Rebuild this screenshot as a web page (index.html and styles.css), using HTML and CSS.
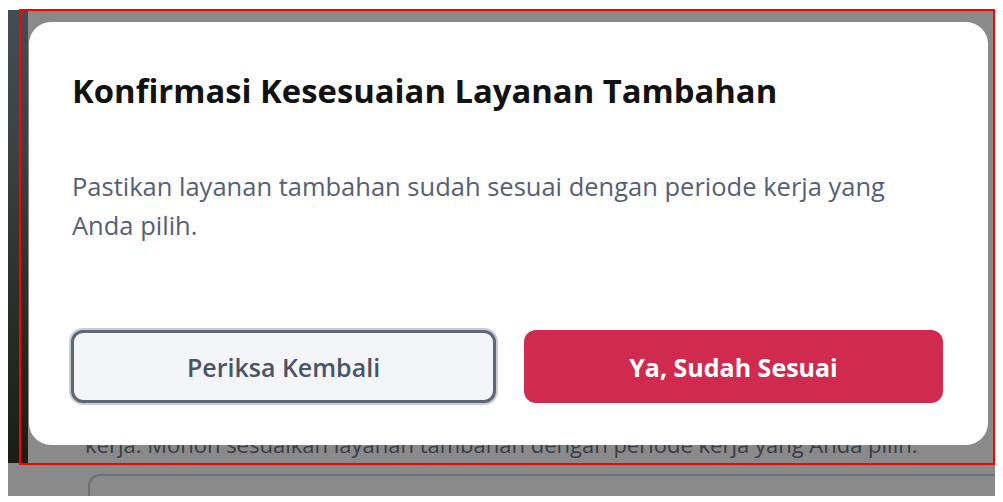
FILE: index.html
```html
<!DOCTYPE html>
<html lang="id">
<head>
    <meta charset="UTF-8">
    <meta name="viewport" content="width=device-width, initial-scale=1.0">
    <title>Konfirmasi Layanan Tambahan</title>
    <link rel="stylesheet" href="styles.css">
</head>
<body>
  <div class="frame">
    <div class="photo"></div>
    <div class="page">
      <p class="page-note">kerja. Mohon sesuaikan layanan tambahan dengan periode kerja yang Anda pilih.</p>
      <div class="page-input"></div>
    </div>

    <div class="modal">
      <h2 class="modal-title">Konfirmasi Kesesuaian Layanan Tambahan</h2>
      <p class="modal-text">Pastikan layanan tambahan sudah sesuai dengan periode kerja yang Anda pilih.</p>
      <div class="modal-actions">
        <button class="btn btn-outline">Periksa Kembali</button>
        <button class="btn btn-primary">Ya, Sudah Sesuai</button>
      </div>
    </div>

    <div class="highlight"></div>
  </div>
</body>
</html>
```

FILE: styles.css
```css
body {
  margin: 0;
  background: #fff;
  font-family: "Open Sans", "Noto Sans", sans-serif;
}
.frame {
  position: relative;
  display: flex;
  margin: 10px 0 0 8px;
  width: 987px;
  height: 486px;
  background: #8a8a8a;
}
.photo {
  width: 20px;
  height: 453px;
  background: linear-gradient(#434d53, #3c4242 30%, #272c27 70%, #1a1d17);
}
.page {
  flex: 1;
  padding-top: 419px;
}
.page-note {
  margin: 0 0 0 57px;
  font-size: 22px;
  line-height: 30px;
  color: #383d47;
  white-space: nowrap;
}
.page-input {
  margin: 15px 0 0 60px;
  height: 40px;
  border: 2px solid #6c6e72;
  border-right: none;
  border-bottom: none;
  border-radius: 12px 0 0 0;
}
.modal {
  position: absolute;
  left: 21px;
  top: 12px;
  width: 959px;
  height: 423px;
  box-sizing: border-box;
  padding: 46px 45px 42px 42px;
  background: #fff;
  border-radius: 22px;
  display: flex;
  flex-direction: column;
}
.modal-title {
  margin: 0 0 0 1px;
  font-size: 32.8px;
  line-height: 45px;
  font-weight: 700;
  color: #121212;
}
.modal-text {
  margin: 54px 0 0 1px;
  font-size: 25.5px;
  line-height: 39px;
  color: #566074;
  width: 840px;
}
.modal-actions {
  margin-top: auto;
  display: flex;
  gap: 28px;
}
.btn {
  flex: 1;
  height: 73px;
  border-radius: 12px;
  font-family: inherit;
  font-size: 25px;
}
.btn-outline {
  background: #f3f5f9;
  border: 3px solid #5e6678;
  box-shadow: 0 0 0 2px #c8cdd6;
  color: #4a5467;
  font-weight: 600;
}
.btn-primary {
  background: #d02b4f;
  border: none;
  color: #fff;
  font-weight: 700;
}
.highlight {
  position: absolute;
  left: 11px;
  top: -1px;
  width: 976px;
  height: 456px;
  border: 2px solid #f00;
  box-sizing: border-box;
}
```
